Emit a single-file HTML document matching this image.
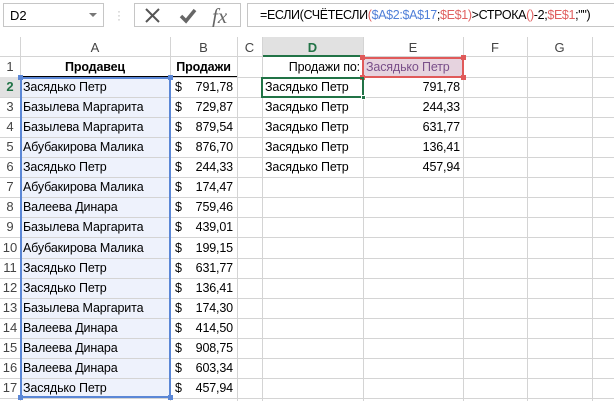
<!DOCTYPE html><html><head><meta charset="utf-8"><style>
body{margin:0;width:614px;height:401px;overflow:hidden;background:#fff;font-family:"Liberation Sans",sans-serif;font-size:12.5px;color:#000;position:relative}
.a{position:absolute;box-sizing:border-box}
.vl{position:absolute;top:37px;height:364px;width:1px;background:#d4d4d4}
.hl{position:absolute;left:0;width:614px;height:1px;background:#d4d4d4}
.ch{position:absolute;top:39px;height:18px;line-height:18px;text-align:center;color:#444;font-size:13px}
.rh{position:absolute;left:0;width:20px;text-align:center;color:#444;height:20px;line-height:20px;font-size:13px}
.c{position:absolute;height:20px;line-height:20px;white-space:nowrap;letter-spacing:-0.15px}
</style></head><body>
<div class="a" style="left:0;top:0;width:614px;height:31px;background:#fff"></div>
<div class="a" style="left:3px;top:3px;width:101px;height:24px;border:1px solid #c6c6c6;padding:4px 6px;font-size:13px">D2</div>
<div class="a" style="left:89px;top:13px;width:0;height:0;border-left:4px solid transparent;border-right:4px solid transparent;border-top:4px solid #777"></div>
<div class="a" style="left:117px;top:9px;color:#bbb;font-size:12px;line-height:4px">·<br>·<br>·</div>
<div class="a" style="left:134px;top:3px;width:107px;height:24px;border:1px solid #c6c6c6"></div>
<svg class="a" style="left:142px;top:5px" width="95" height="22"><path d="M4 4 L17 17 M17 4 L4 17" stroke="#555" stroke-width="2"/><path d="M39 11 L44 16 L53 5" stroke="#666" stroke-width="3.5" fill="none"/><text x="70" y="18" font-family="Liberation Serif" font-style="italic" font-size="21" fill="#666">fx</text></svg>
<div class="a" style="left:247px;top:3px;width:367px;height:24px;border:1px solid #c6c6c6;border-right:none;padding:4px 0 0 12px;white-space:nowrap;font-size:12.5px;letter-spacing:-0.35px">=ЕСЛИ(СЧЁТЕСЛИ<span style="color:#e06060">(</span><span style="color:#4f7fd8">$A$2:$A$17</span>;<span style="color:#e06060">$E$1)</span>&gt;СТРОКА<span style="color:#e06060">()</span>-2;<span style="color:#e06060">$E$1</span>;"")</div>
<div class="a" style="left:0;top:37px;width:614px;height:20px;background:#fff;border-bottom:1px solid #d4d4d4"></div>
<div class="a" style="left:262px;top:37px;width:101px;height:20px;background:#e1e1e1;border-bottom:2px solid #217346"></div>
<div class="vl" style="left:20px"></div><div class="vl" style="left:170px"></div><div class="vl" style="left:237px"></div><div class="vl" style="left:262px"></div><div class="vl" style="left:363px"></div><div class="vl" style="left:463px"></div><div class="vl" style="left:527px"></div><div class="vl" style="left:592px"></div>
<div class="ch" style="left:20px;width:150px">A</div><div class="ch" style="left:170px;width:67px">B</div><div class="ch" style="left:237px;width:25px">C</div><div class="ch" style="left:262px;width:101px;color:#217346;font-weight:bold">D</div><div class="ch" style="left:363px;width:100px">E</div><div class="ch" style="left:463px;width:64px">F</div><div class="ch" style="left:527px;width:65px">G</div>
<div class="a" style="left:21px;top:78px;width:149px;height:320px;background:#eef2fc"></div>
<div class="a" style="left:363px;top:58px;width:100px;height:19px;background:#e6d3df"></div>
<div id="g"></div>
<script>
var A=["Продавец","Засядько Петр","Базылева Маргарита","Базылева Маргарита","Абубакирова Малика","Засядько Петр","Абубакирова Малика","Валеева Динара","Базылева Маргарита","Абубакирова Малика","Засядько Петр","Засядько Петр","Базылева Маргарита","Валеева Динара","Валеева Динара","Валеева Динара","Засядько Петр"];
var B=["Продажи","791,78","729,87","879,54","876,70","244,33","174,47","759,46","439,01","199,15","631,77","136,41","174,30","414,50","908,75","603,34","457,94"];
var E=["791,78","244,33","631,77","136,41","457,94"];
var h="";
for(var i=0;i<17;i++){var y=57+i*20.06;
h+='<div class="hl" style="top:'+Math.round(y+20)+'px"></div>';
h+='<div class="rh" style="top:'+Math.round(y)+'px;'+(i==1?'color:#217346;font-weight:bold;background:#e1e1e1;':'')+'">'+(i+1)+'</div>';
if(i==0){h+='<div class="c" style="left:20px;width:150px;text-align:center;font-weight:bold;top:'+Math.round(y)+'px">Продавец</div><div class="c" style="left:170px;width:67px;text-align:center;font-weight:bold;top:'+Math.round(y)+'px">Продажи</div>';}
else{h+='<div class="c" style="left:23px;top:'+Math.round(y)+'px">'+A[i]+'</div><div class="c" style="left:175px;top:'+Math.round(y)+'px">$</div><div class="c" style="left:170px;width:63px;text-align:right;top:'+Math.round(y)+'px">'+B[i]+'</div>';}
if(i>=1&&i<=5){h+='<div class="c" style="left:265px;top:'+Math.round(y)+'px">Засядько Петр</div><div class="c" style="left:363px;width:97px;text-align:right;top:'+Math.round(y)+'px">'+E[i-1]+'</div>';}
}
document.getElementById("g").innerHTML=h;
</script>
<div class="a" style="left:20px;top:76px;width:217px;height:1px;background:#000"></div>
<div class="c" style="left:262px;width:98px;text-align:right;top:57px">Продажи по:</div>
<div class="c" style="left:366px;top:57px;color:#7a4f8a">Засядько Петр</div>
<div class="a" style="left:362px;top:57px;width:102px;height:21px;border:2px solid #e05a5a"></div>
<div class="a" style="left:360px;top:55px;width:5px;height:5px;background:#e05a5a"></div><div class="a" style="left:461px;top:55px;width:5px;height:5px;background:#e05a5a"></div><div class="a" style="left:360px;top:75px;width:5px;height:5px;background:#e05a5a"></div><div class="a" style="left:461px;top:75px;width:5px;height:5px;background:#e05a5a"></div>
<div class="a" style="left:20px;top:77px;width:151px;height:321px;border:2px solid #5b87d6"></div>
<div class="a" style="left:18px;top:75px;width:5px;height:5px;background:#5b87d6"></div><div class="a" style="left:168px;top:75px;width:5px;height:5px;background:#5b87d6"></div><div class="a" style="left:18px;top:395px;width:5px;height:5px;background:#5b87d6"></div><div class="a" style="left:168px;top:395px;width:5px;height:5px;background:#5b87d6"></div>
<div class="a" style="left:261px;top:77px;width:103px;height:21px;border:2px solid #217346"></div>
<div class="a" style="left:361px;top:95px;width:5px;height:5px;background:#217346;border:1px solid #fff"></div>
</body></html>
